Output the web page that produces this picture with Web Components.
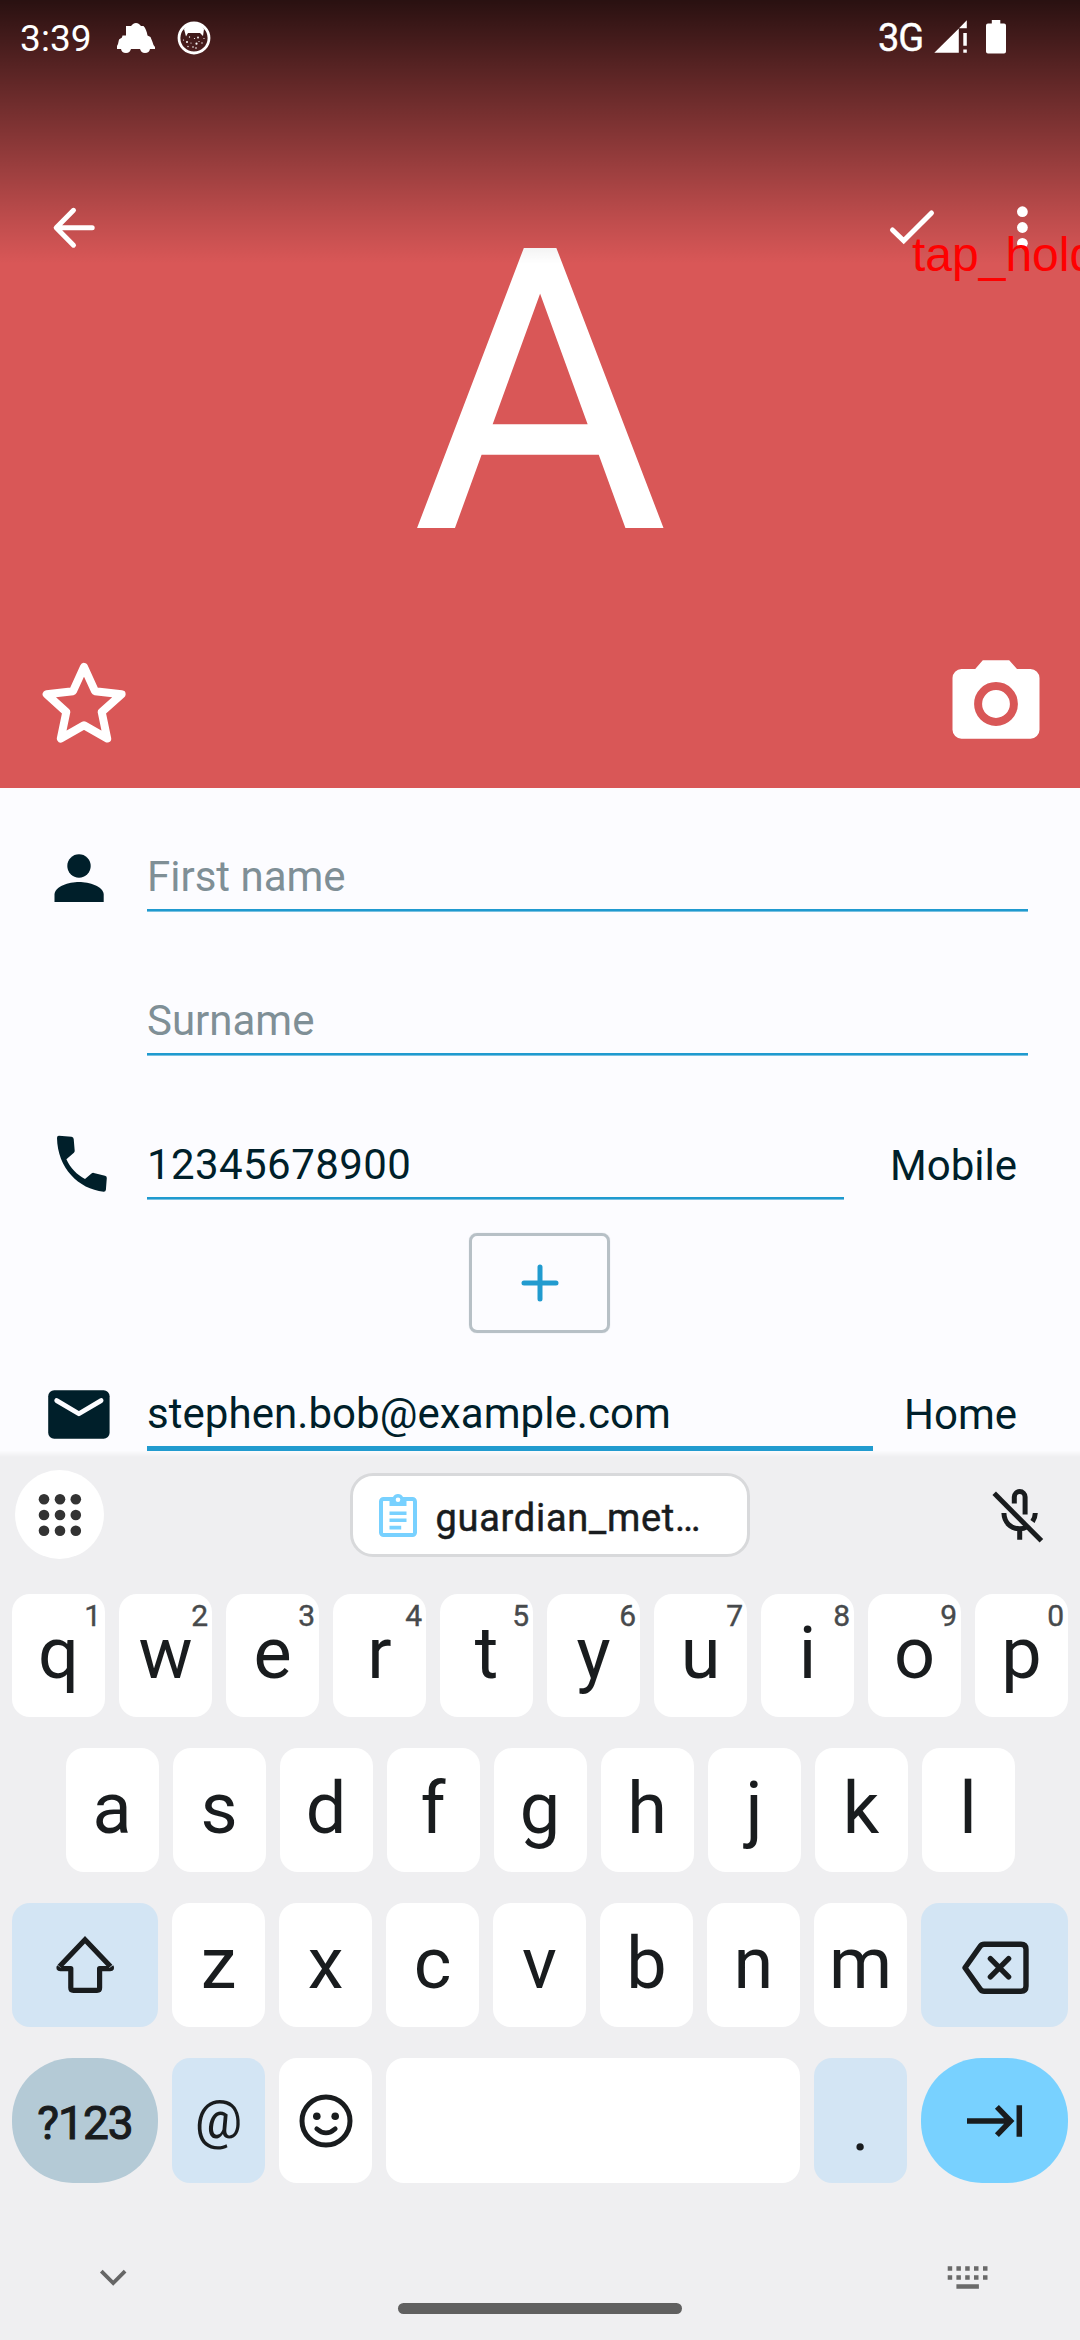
<!DOCTYPE html>
<html lang="en">
<head>
<meta charset="utf-8">
<title>Edit contact</title>
<style>
  html, body { margin: 0; padding: 0; }
  body { width: 1080px; height: 2340px; overflow: hidden; font-family: Roboto, "Liberation Sans", sans-serif; background: #fcfcff; }
</style>
</head>
<body>
<phone-screen></phone-screen>

<script>
function define(tag, css, html) {
  customElements.define(tag, class extends HTMLElement {
    constructor() {
      super();
      const t = document.createElement('template');
      t.innerHTML = '<style>*{box-sizing:border-box} svg{display:block;flex:none}' + css + '</style>' + html;
      this.attachShadow({ mode: 'open' }).appendChild(t.content.cloneNode(true));
    }
  });
}

/* ---------- status bar ---------- */
define('status-bar', `
  :host { display: flex; height: 76px; justify-content: space-between; color: #fff; }
  .side { display: flex; align-items: flex-start; }
  .time { font-size: 37px; line-height: 44px; padding: 17px 0 0 20px; width: 117px; letter-spacing: .1px; }
  .net { font-size: 38px; line-height: 44px; padding-top: 16px; width: 55px; letter-spacing: -1px; -webkit-text-stroke: .4px #fff; }
`, `
  <div class="side">
    <div class="time">3:39</div>
    <svg width="180" height="76" viewBox="117 0 180 76" fill="#fff">
      <path d="M126 26h5l2-2c2-1.300 4-1.300 6 0l2 2h2.500c2 2 3.500 6 4 9.500l3 1.500 2 5 1 3 1.500 2v2h-5c-.5 2.500-2 4-5 4s-4-1.500-5-4h-9c-1 2.500-2 4-5 4s-4.500-1.500-5-4h-4.500v-2l1.500-3 1-4.500 3-2 .5-2h3.500z"/>
      <circle cx="194" cy="38" r="15" fill="none" stroke="#fff" stroke-width="2.800"/>
      <path d="M184 29c5-9 15-9 20 0l-1 7-3-3h-12l-2 3.500z"/>
      <g>
        <circle cx="187" cy="42" r="1"/><circle cx="191" cy="43" r=".6"/><circle cx="196.500" cy="43.700" r="1.100"/>
        <circle cx="202" cy="43" r=".7"/><circle cx="198" cy="37.500" r=".9"/><circle cx="194.500" cy="38.500" r=".6"/>
        <circle cx="189.500" cy="37" r=".7"/><circle cx="188" cy="46.500" r=".7"/><circle cx="193" cy="47" r=".8"/>
        <circle cx="196" cy="48" r=".8"/><circle cx="199" cy="41.500" r=".6"/><circle cx="183.500" cy="40" r=".6"/><circle cx="204" cy="38.500" r=".6"/>
      </g>
    </svg>
  </div>
  <div class="side">
    <div class="net">3G</div>
    <svg width="147" height="76" viewBox="933 0 147 76" fill="#fff">
      <path d="M934.300 52.800L958.800 28.500V52.800zM959 28.200L966.800 20.300V28.200zM963.300 33h3.500v12.700h-3.500zM963.300 49.600h3.500v3.200h-3.500z"/>
      <path d="M988 23.600h3.800V20h8.500v3.600h3.700a2 2 0 0 1 2 2v26a2 2 0 0 1-2 2h-16a2 2 0 0 1-2-2v-26a2 2 0 0 1 2-2z"/>
    </svg>
  </div>
`);

/* ---------- app bar with back / save / overflow ---------- */
define('app-bar', `
  :host { display: flex; justify-content: space-between; align-items: center; padding: 0 50px; height: 56px; margin-top: 124px; }
  .end { display: flex; gap: 78px; align-items: center; }
`, `
  <svg width="48" height="48" viewBox="50 204 48 48" fill="none" stroke="#fff" stroke-width="5" stroke-linecap="round" stroke-linejoin="round">
    <path d="M92.200 227.700H57M73.500 210.300L56.200 227.700L73.500 245.200"/>
  </svg>
  <div class="end">
    <svg width="48" height="48" viewBox="888 204 48 48" fill="none" stroke="#fff" stroke-width="5" stroke-linecap="round" stroke-linejoin="miter">
      <path d="M892.500 230L903.700 240.800L931.500 213"/>
    </svg>
    <svg width="16" height="48" viewBox="1014 204 16 48" fill="#fff">
      <circle cx="1022.400" cy="211.700" r="5.400"/><circle cx="1022.400" cy="227.500" r="5.400"/><circle cx="1022.400" cy="243.300" r="5.400"/>
    </svg>
  </div>
`);

/* ---------- favourite / photo actions ---------- */
define('hero-actions', `
  :host { display: flex; justify-content: space-between; align-items: flex-end; padding: 0 40px 45px 42px; margin-top: auto; }
`, `
  <svg width="84" height="81" viewBox="42 662 84 81" fill="none" stroke="#fff" stroke-width="8" stroke-linejoin="round">
    <path d="M84 667L95 691.200L121.600 694.300L101.700 712L107.200 738.500L84 725.200L60.800 738.500L66.300 712L46.700 694.300L73 691.200Z"/>
  </svg>
  <svg width="88" height="84" viewBox="952 659 88 84">
    <path fill="#fff" d="M961.500 669h13.700l7.600-8.700h26.400l7.800 8.700h13.500a9 9 0 0 1 9 9v51.700a9 9 0 0 1-9 9h-69a9 9 0 0 1-9-9V678a9 9 0 0 1 9-9z"/>
    <circle cx="996" cy="704" r="17.900" fill="none" stroke="#d95757" stroke-width="8"/>
  </svg>
`);

define('contact-hero', `
  :host { display: grid; flex: none; height: 788px; background: #d95757; }
  :host > * { grid-area: 1 / 1; min-height: 0; }
  .letter { justify-self: center; font-size: 394px; line-height: 462px; padding-top: 162px; color: #fff; }
  .scrim { height: 264px; background: linear-gradient(rgba(0,0,0,.81), rgba(0,0,0,.56) 30%, rgba(0,0,0,.34) 57%, rgba(0,0,0,.125) 83%, rgba(0,0,0,0)); }
  .chrome { display: flex; flex-direction: column; }
`, `
  <div class="letter"><slot></slot></div>
  <div class="scrim"></div>
  <div class="chrome"><status-bar></status-bar><app-bar></app-bar><hero-actions></hero-actions></div>
`);

/* ---------- form ---------- */
define('field-row', `
  :host { display: flex; align-items: flex-end; height: 144px; font-size: 42px; line-height: 50px; color: #001f2a; }
  :host([first]) { height: 124px; }
  :host([active]) { height: 118px; }
  .icon { width: 147px; flex: none; }
  .field { flex: 1; min-width: 0; }
  .value { padding-bottom: 7px; white-space: nowrap; letter-spacing: var(--value-spacing, 0); }
  :host([hint]) .value { color: #7f8f96; }
  .rule { height: 3px; background: linear-gradient(#1f9acf 0 2px, #79c1e1 2px); }
  :host([active]) .rule { height: 5px; background: #219bcf; }
  .type { width: var(--type-width, 52px); flex: none; text-align: right; padding: 0 63px 9px 0; white-space: nowrap; }
  :host([hint]) .type { padding: 0; }
  :host([active]) .type { padding-bottom: 11px; }
`, `
  <div class="icon"><slot name="icon"></slot></div>
  <div class="field"><div class="value"><slot></slot></div><div class="rule"></div></div>
  <div class="type"><slot name="type"></slot></div>
`);

define('add-button', `
  :host { display: flex; align-items: center; justify-content: center; width: 141px; height: 100px; margin: 33px 0 0 469px; border: 3px solid #b7c0c6; border-radius: 8px; box-shadow: 0 0 1px #c4ccd1; }
`, `
  <svg width="38" height="38" viewBox="0 0 38 38" stroke="#219bcf" stroke-width="5" stroke-linecap="round"><path d="M19 3V35M3 19H35"/></svg>
`);

define('contact-form', `
  :host { display: block; flex: none; height: 663px; background: #fcfcff; }
  svg { fill: #001f2a; }
`, `
  <field-row first hint>
    <svg slot="icon" style="margin:0 0 10px 54px" width="50" height="48" viewBox="54 854 50 48">
      <circle cx="79" cy="866" r="11.700"/>
      <path d="M79 882c-10 0-24.500 4.500-24.500 12.500V902h49.200v-7.500C103.700 886.500 89 882 79 882z"/>
    </svg>First name
  </field-row>
  <field-row hint>Surname</field-row>
  <field-row style="--type-width:236px;--value-spacing:.42px">
    <svg slot="icon" style="margin:0 0 8px 56px" width="52" height="57" viewBox="56 1135 52 57">
      <path d="M59 1135.800l12.500.9q2 .2 2.200 2.300l1 11.700q.1 1.200-.8 2.100l-7.500 6.500c4 8.800 10.500 15.500 18.600 19.700l6.500-5.500q1-.9 2.300-.6l11.200 2.800q1.900.5 1.800 2.400l-.9 11.600q-.2 2.100-2.300 2C78.500 1189 57.500 1168 57 1138q0-2.300 2-2.200z"/>
    </svg>12345678900<span slot="type">Mobile</span>
  </field-row>
  <add-button></add-button>
  <field-row active style="--type-width:207px;--value-spacing:.06px">
    <svg slot="icon" style="margin:0 0 12px 48px" width="62" height="49" viewBox="48 1390 62 49">
      <rect x="48.200" y="1390.200" width="61.400" height="48.600" rx="6"/>
      <path d="M56.700 1400.600L78.900 1413.800L101.100 1400.600" fill="none" stroke="#fcfcff" stroke-width="4.800" stroke-linecap="round" stroke-linejoin="round"/>
    </svg>stephen.bob@example.com<span slot="type">Home</span>
  </field-row>
`);

/* ---------- keyboard ---------- */
define('key-cap', `
  :host { position: relative; display: flex; flex: none; align-items: center; justify-content: center; width: 93px; height: 100%; border-radius: 18px; background: #fff; color: #191c1e; font-size: 72px; line-height: 84px; padding-bottom: 3px; }
  :host([wide]) { width: 147px; }
  :host([fn]) { background: #d3e5f4; }
  :host([round]) { border-radius: 61px; }
  :host([sym]) { background: #b4cad6; font-size: 46px; font-weight: 400; -webkit-text-stroke: 1.100px #191c1e; letter-spacing: -1px; padding: 4px 0 0; }
  :host([tab]) { background: #78d1ff; }
  :host([at]) { font-size: 53px; padding: 0 0 1px; }
  :host([dot]) { font-size: 66px; padding: 14px 0 0; }
  :host([icon]) { padding: 0; }
  :host([space]) { width: auto; flex: 1; }
  .hint { position: absolute; top: 5px; right: 4px; font-size: 30px; line-height: 34px; color: #474a4c; -webkit-text-stroke: .4px #474a4c; }
`, `<slot></slot><span class="hint"><slot name="hint"></slot></span>`);

define('key-row', `
  :host { display: flex; flex: none; justify-content: center; gap: 14px; padding: 0 12px; }
`, `<slot></slot>`);

define('suggestion-bar', `
  :host { display: flex; flex: none; justify-content: space-between; height: 143px; padding: 19px 36px 0 15px; background: linear-gradient(#fbfbfd, #efeff1 6px); }
  .apps { display: flex; align-items: center; justify-content: center; width: 89px; height: 89px; border-radius: 50%; background: #fff; }
  .chip { display: flex; align-items: center; gap: 19px; width: 400px; height: 84px; margin: 3px 0 0 4px; padding: 0 0 0 26px; border: 3px solid #d8d9db; border-radius: 23px; background: #fff; color: #191c1e; }
  .chip span { font-size: 38px; line-height: 46px; padding-top: 6px; letter-spacing: .72px; -webkit-text-stroke: .5px #191c1e; white-space: nowrap; }
  .mic { margin-top: 18px; }
`, `
  <div class="apps">
    <svg width="46" height="46" viewBox="-23 -23 46 46" fill="#333">
      <circle cx="-16" cy="-15.700" r="5.300"/><circle cx="0" cy="-15.700" r="5.300"/><circle cx="15.800" cy="-15.700" r="5.300"/>
      <circle cx="-16" cy="0" r="5.300"/><circle cx="0" cy="0" r="5.300"/><circle cx="15.800" cy="0" r="5.300"/>
      <circle cx="-16" cy="15.800" r="5.300"/><circle cx="0" cy="15.800" r="5.300"/><circle cx="15.800" cy="15.800" r="5.300"/>
    </svg>
  </div>
  <div class="chip">
    <svg width="38" height="46" viewBox="0 0 38 46">
      <rect x="2" y="7" width="34" height="36" rx="2.500" fill="none" stroke="#78d1ff" stroke-width="4"/>
      <path fill="#78d1ff" d="M10.500 5h3.500a5.500 5 0 0 1 10 0h3.500v9h-17zM10.500 19.500h17v3.500h-17zM10.500 26.500h17v3.500h-17zM10.500 33.700h11.700v3.700h-11.700z"/>
      <circle cx="19" cy="7.800" r="2.300" fill="#fff"/>
    </svg>
    <span>guardian_met…</span>
  </div>
  <svg class="mic" width="53" height="56" viewBox="991 1488 53 56" fill="none" stroke="#191c1e" stroke-width="5">
    <path d="M1014.300 1503.500V1497a5.400 5.400 0 0 1 10.800 0V1514.500"/>
    <path d="M1003.900 1513c.4 9.500 6.800 15.800 15.800 15.800c3 0 5-.7 7-2M1019.700 1529V1539.800M1035.300 1513c-.1 3.500-1.100 6-2.800 8.500"/>
    <path d="M994.200 1493.300L1041.400 1540.800"/>
  </svg>
`);

define('nav-strip', `
  :host { display: flex; flex: none; flex-direction: column; height: 157px; padding-top: 82px; }
  .tools { display: flex; justify-content: space-between; height: 26px; padding: 0 92px 0 99px; }
  .pill { width: 284px; height: 11px; margin: 12px 0 0 398px; border-radius: 6px; background: #606060; }
`, `
  <div class="tools">
    <svg width="28" height="26" viewBox="99 2265 28 26" fill="none" stroke="#666" stroke-width="3.800"><path d="M101.300 2271.200L113.200 2283L125.100 2271.200"/></svg>
    <svg width="41" height="26" viewBox="947 2265 41 26" fill="#6a6a6a">
      <path d="M947.700 2266.300h4.500v4.500h-4.500zM956.400 2266.300h4.500v4.500h-4.500zM965.200 2266.300h4.500v4.500h-4.500zM974 2266.300h4.500v4.500h-4.500zM983 2266.300h4.500v4.500h-4.500zM947.700 2275.200h4.500v4.500h-4.500zM956.400 2275.200h4.500v4.500h-4.500zM965.200 2275.200h4.500v4.500h-4.500zM974 2275.200h4.500v4.500h-4.500zM983 2275.200h4.500v4.500h-4.500zM956.400 2284.200h22.500v4.500h-22.500z"/>
    </svg>
  </div>
  <div class="pill"></div>
`);

const letters = s => [...s].map(c => `<key-cap>${c}</key-cap>`).join('');
const numbered = s => [...s].map((c, i) => `<key-cap>${c}<span slot="hint">${(i + 1) % 10}</span></key-cap>`).join('');

define('soft-keyboard', `
  :host { display: flex; flex: none; flex-direction: column; height: 889px; background: #efeff1; }
  .keys { display: flex; flex-direction: column; gap: 31px; }
`, `
  <suggestion-bar></suggestion-bar>
  <div class="keys">
    <key-row style="height:123px">${numbered('qwertyuiop')}</key-row>
    <key-row style="height:124px">${letters('asdfghjkl')}</key-row>
    <key-row style="height:124px">
      <key-cap wide fn icon style="width:146px">
        <svg width="60" height="60" viewBox="55 1935 60 60" fill="none" stroke="#191c1e" stroke-width="5.200" stroke-linejoin="round">
          <path stroke-linejoin="miter" d="M59.500 1966.500L85 1939.800L110.500 1966.500"/>
          <path d="M59.300 1966.700q-1.300 1.900 1 1.900H70.800V1987.700q0 2.600 2.600 2.600H97q2.600 0 2.600-2.600V1968.600h10.600q2.200 0 .9-1.900"/>
        </svg>
      </key-cap>${letters('zxcvbnm')}
      <key-cap wide fn icon>
        <svg width="68" height="62" viewBox="959 1931 68 62" fill="none" stroke="#191c1e" stroke-width="5.400" stroke-linejoin="round" stroke-linecap="round">
          <path d="M963 1964.800L978.200 1943.300q1.500-2.100 4-2.100H1019q5 0 5 5V1983.200q0 5-5 5H982.200q-2.500 0-4-2.100z"/>
          <path d="M988.400 1955.600L1006.600 1973.800M1006.600 1955.600L988.400 1973.800"/>
        </svg>
      </key-cap>
    </key-row>
    <key-row style="height:125px">
      <key-cap wide sym round style="width:146px">?123</key-cap>
      <key-cap fn at>@</key-cap>
      <key-cap icon>
        <svg width="54" height="56" viewBox="-27 -28 54 56" fill="none" stroke="#191c1e" stroke-width="5">
          <ellipse rx="24" ry="24"/>
          <circle cx="-9.200" cy="-4.700" r="3.800" fill="#191c1e" stroke="none"/><circle cx="9.200" cy="-4.700" r="3.800" fill="#191c1e" stroke="none"/>
          <path stroke-width="4.600" stroke-linecap="round" d="M-9.300 7.700q9.300 8.400 18.600 0"/>
        </svg>
      </key-cap>
      <key-cap space></key-cap>
      <key-cap fn dot>.</key-cap>
      <key-cap wide tab round icon>
        <svg width="60" height="34" viewBox="965 2103.500 60 34" fill="none" stroke="#191c1e" stroke-width="5.500">
          <path d="M967 2120.500H1010M996.900 2106.300L1010.600 2120.500L996.900 2134.700M1019.300 2104.800V2136.300"/>
        </svg>
      </key-cap>
    </key-row>
  </div>
  <nav-strip></nav-strip>
`);

/* ---------- gesture caption drawn over everything ---------- */
define('gesture-caption', `
  :host { position: absolute; left: 912px; top: 227px; font: 48px/55px "Liberation Sans", Arial, sans-serif; color: #f00; white-space: nowrap; }
`, `<slot></slot>`);

define('phone-screen', `
  :host { position: relative; display: flex; flex-direction: column; width: 1080px; height: 2340px; overflow: hidden; }
`, `
  <contact-hero>A</contact-hero>
  <contact-form></contact-form>
  <soft-keyboard></soft-keyboard>
  <gesture-caption>tap_hold</gesture-caption>
`);
</script>
</body>
</html>
